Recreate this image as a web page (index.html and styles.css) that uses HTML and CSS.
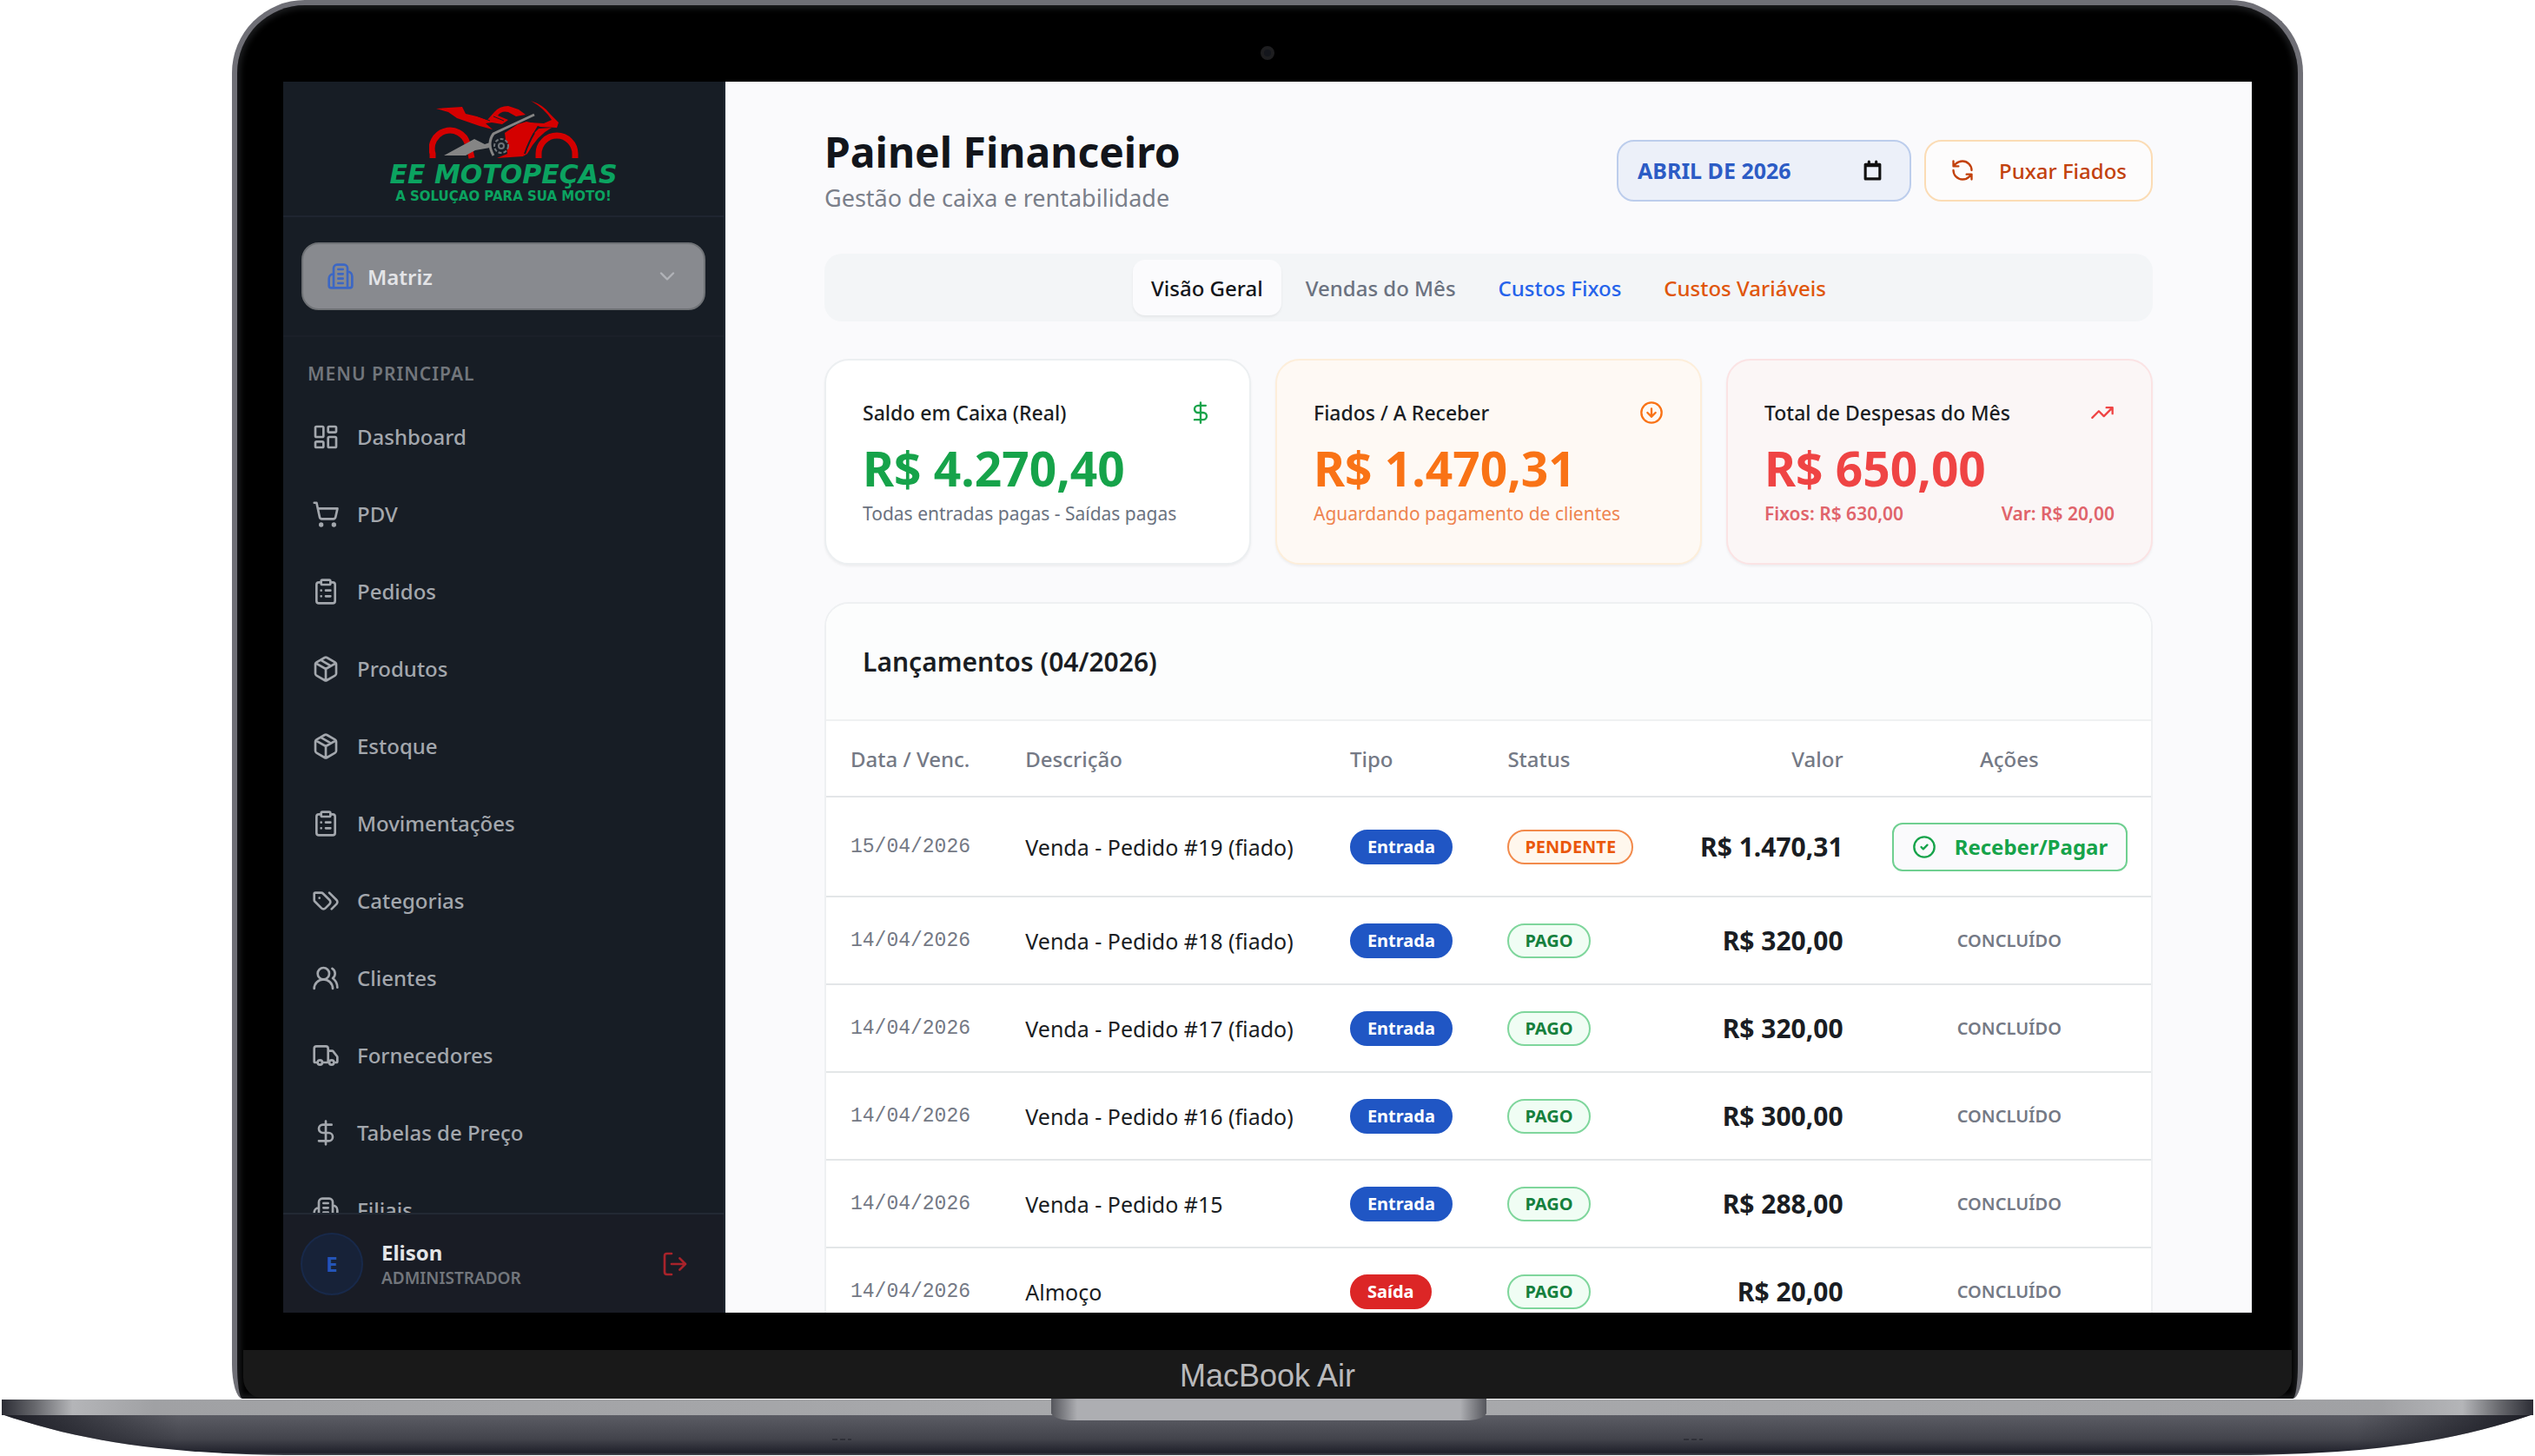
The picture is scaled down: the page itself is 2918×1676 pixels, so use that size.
FILE: index.html
```html
<!DOCTYPE html>
<html lang="pt-BR">
<head>
    <meta charset="UTF-8">
    <meta name="viewport" content="width=device-width, initial-scale=1.0">
    <title>Painel Financeiro - EE Motopeças</title>
    <link rel="stylesheet" href="styles.css">
</head>
<body>
    <!-- Icons -->
    <svg class="sprite" aria-hidden="true">
        <symbol id="i-dashboard" viewBox="0 0 24 24"><rect x="3" y="3" width="7" height="9" rx="1"/><rect x="14" y="3" width="7" height="5" rx="1"/><rect x="14" y="12" width="7" height="9" rx="1"/><rect x="3" y="16" width="7" height="5" rx="1"/></symbol>
        <symbol id="i-cart" viewBox="0 0 24 24"><circle cx="8" cy="21" r="1"/><circle cx="19" cy="21" r="1"/><path d="M2.05 2.05h2l2.66 12.42a2 2 0 0 0 2 1.58h9.78a2 2 0 0 0 1.95-1.57l1.65-7.43H5.12"/></symbol>
        <symbol id="i-clipboard" viewBox="0 0 24 24"><rect x="8" y="2" width="8" height="4" rx="1"/><path d="M16 4h2a2 2 0 0 1 2 2v14a2 2 0 0 1-2 2H6a2 2 0 0 1-2-2V6a2 2 0 0 1 2-2h2M12 11h4M12 16h4M8 11h.01M8 16h.01"/></symbol>
        <symbol id="i-package" viewBox="0 0 24 24"><path d="m7.5 4.27 9 5.15M21 8a2 2 0 0 0-1-1.73l-7-4a2 2 0 0 0-2 0l-7 4A2 2 0 0 0 3 8v8a2 2 0 0 0 1 1.73l7 4a2 2 0 0 0 2 0l7-4A2 2 0 0 0 21 16ZM3.3 7l8.7 5 8.7-5M12 22V12"/></symbol>
        <symbol id="i-tags" viewBox="0 0 24 24"><path d="m15 5 6.3 6.3a2.4 2.4 0 0 1 0 3.4L17 19"/><path d="M9.586 5.586A2 2 0 0 0 8.172 5H3a1 1 0 0 0-1 1v5.172a2 2 0 0 0 .586 1.414L8.29 18.29a2.426 2.426 0 0 0 3.42 0l3.58-3.58a2.426 2.426 0 0 0 0-3.42zM6.5 9.5h.01"/></symbol>
        <symbol id="i-users" viewBox="0 0 24 24"><path d="M18 21a8 8 0 0 0-16 0"/><circle cx="10" cy="8" r="5"/><path d="M22 20c0-3.37-2-6.5-4-8a5 5 0 0 0-.45-8.3"/></symbol>
        <symbol id="i-truck" viewBox="0 0 24 24"><path d="M14 18V6a2 2 0 0 0-2-2H4a2 2 0 0 0-2 2v11a1 1 0 0 0 1 1h2M15 18H9M19 18h2a1 1 0 0 0 1-1v-3.65a1 1 0 0 0-.22-.624l-3.48-4.35A1 1 0 0 0 17.52 8H14"/><circle cx="17" cy="18" r="2"/><circle cx="7" cy="18" r="2"/></symbol>
        <symbol id="i-dollar" viewBox="0 0 24 24"><path d="M12 2v20M17 5H9.5a3.5 3.5 0 0 0 0 7h5a3.5 3.5 0 0 1 0 7H6"/></symbol>
        <symbol id="i-building" viewBox="0 0 24 24"><path d="M6 22V5a3 3 0 0 1 3-3h6a3 3 0 0 1 3 3v17ZM6 10a4 4 0 0 0-4 4v6a2 2 0 0 0 2 2h2M18 8a4 4 0 0 1 4 4v8a2 2 0 0 1-2 2h-2M10 6h4M10 10h4M10 14h4M10 18h4"/></symbol>
        <symbol id="i-chevron" viewBox="0 0 24 24"><path d="m6 9 6 6 6-6"/></symbol>
        <symbol id="i-logout" viewBox="0 0 24 24"><path d="M9 21H5a2 2 0 0 1-2-2V5a2 2 0 0 1 2-2h4M16 17l5-5-5-5M21 12H9"/></symbol>
        <symbol id="i-refresh" viewBox="0 0 24 24"><path d="M21 12a9 9 0 0 0-9-9 9.75 9.75 0 0 0-6.74 2.74L3 8M3 3v5h5M3 12a9 9 0 0 0 9 9 9.75 9.75 0 0 0 6.74-2.74L21 16M16 16h5v5"/></symbol>
        <symbol id="i-calendar" viewBox="0 0 24 24"><path d="M4 5h16v16H4zM4 6.500h16M8 2v3M16 2v3"/></symbol>
        <symbol id="i-arrow-down" viewBox="0 0 24 24"><circle cx="12" cy="12" r="10"/><path d="M12 8v8M8 12l4 4 4-4"/></symbol>
        <symbol id="i-trend" viewBox="0 0 24 24"><path d="m22 7-8.5 8.500-5-5L2 17M16 7h6v6"/></symbol>
        <symbol id="i-check" viewBox="0 0 24 24"><circle cx="12" cy="12" r="10"/><path d="m9 12 2 2 4-4"/></symbol>
    </svg>

    <div class="laptop">
        <div class="lid">
            <div class="camera"></div>
            <div class="screen">
                <aside class="sidebar">
                    <div class="brand">
                        <svg class="brand-bike" viewBox="0 0 172 70" aria-hidden="true">
                            <g fill="none" stroke="#d40000" stroke-width="7">
                                <path d="M4 67V62A20 20 0 0 1 44 50M47 58 49 67"/>
                                <path d="M126 67V62A20 20 0 0 1 168 62V67"/>
                            </g>
                            <g fill="#d40000">
                                <path d="M8 10 38 8 42 16 55 19 67 23 75 14Q81 7 91 7L103 11 111 17 100 19 91 14Q83 12 79 18L91 23 84 28 72 26 65 27 73 34 58 30 32 21 22 14Z"/>
                                <path d="M117 1Q132 6 139 16L149 26 147 32 128 31 114 26 132 27 141 23Q133 10 117 1Z"/>
                                <path d="M87 38 102 28 112 25 126 28 120 38 108 65 78 67 90 62Z"/>
                                <path d="M126 33 141 32Q124 41 113 62L108 65Q113 44 126 33Z"/>
                            </g>
                            <path d="M121 38Q115 48 110 62" fill="none" stroke="#171d25" stroke-width="2"/>
                            <path d="M44 14 70 24 M74 19 86 24" fill="none" stroke="#171d25" stroke-width="1"/>
                            <path d="M17 64 52 45 64 51 70 49V55L53 58 42 64Z" fill="#858585"/>
                            <path d="M121 17 74 39Q66 50 74 64" fill="none" stroke="#858585" stroke-width="3"/>
                            <circle cx="83" cy="53" r="8" fill="#171d25" stroke="#6f7479" stroke-width="2" stroke-dasharray="4 2"/>
                            <circle cx="83" cy="53" r="3" fill="none" stroke="#6f7479" stroke-width="2"/>
                        </svg>
                        <span class="brand-name">EE MOTOPEÇAS</span>
                        <span class="brand-slogan">A SOLUÇAO PARA SUA MOTO!</span>
                    </div>

                    <div class="branch">
                        <div class="branch-box">
                            <svg class="icon branch-icon"><use href="#i-building"/></svg>
                            <select class="branch-select" aria-label="Filial">
                                <option>Matriz</option>
                            </select>
                            <svg class="icon branch-chevron"><use href="#i-chevron"/></svg>
                        </div>
                    </div>

                    <nav class="menu">
                        <h2 class="menu-title">MENU PRINCIPAL</h2>
                        <a class="menu-link" href="#"><svg class="icon"><use href="#i-dashboard"/></svg>Dashboard</a>
                        <a class="menu-link" href="#"><svg class="icon"><use href="#i-cart"/></svg>PDV</a>
                        <a class="menu-link" href="#"><svg class="icon"><use href="#i-clipboard"/></svg>Pedidos</a>
                        <a class="menu-link" href="#"><svg class="icon"><use href="#i-package"/></svg>Produtos</a>
                        <a class="menu-link" href="#"><svg class="icon"><use href="#i-package"/></svg>Estoque</a>
                        <a class="menu-link" href="#"><svg class="icon"><use href="#i-clipboard"/></svg>Movimentações</a>
                        <a class="menu-link" href="#"><svg class="icon"><use href="#i-tags"/></svg>Categorias</a>
                        <a class="menu-link" href="#"><svg class="icon"><use href="#i-users"/></svg>Clientes</a>
                        <a class="menu-link" href="#"><svg class="icon"><use href="#i-truck"/></svg>Fornecedores</a>
                        <a class="menu-link" href="#"><svg class="icon"><use href="#i-dollar"/></svg>Tabelas de Preço</a>
                        <a class="menu-link" href="#"><svg class="icon"><use href="#i-building"/></svg>Filiais</a>
                    </nav>

                    <div class="user">
                        <span class="avatar">E</span>
                        <div class="user-info">
                            <strong class="user-name">Elison</strong>
                            <span class="user-role">ADMINISTRADOR</span>
                        </div>
                        <button class="logout" type="button" aria-label="Sair"><svg class="icon"><use href="#i-logout"/></svg></button>
                    </div>
                </aside>

                <main class="content">
                    <header class="page-header">
                        <div>
                            <h1>Painel Financeiro</h1>
                            <p class="subtitle">Gestão de caixa e rentabilidade</p>
                        </div>
                        <div class="actions">
                            <label class="month">
                                <input class="month-input" type="text" value="ABRIL DE 2026" aria-label="Mês">
                                <svg class="icon month-icon"><use href="#i-calendar"/></svg>
                            </label>
                            <button class="pull-btn" type="button"><svg class="icon icon-sm"><use href="#i-refresh"/></svg>Puxar Fiados</button>
                        </div>
                    </header>

                    <div class="tabs">
                        <button class="tab active" type="button">Visão Geral</button>
                        <button class="tab" type="button">Vendas do Mês</button>
                        <button class="tab blue" type="button">Custos Fixos</button>
                        <button class="tab orange" type="button">Custos Variáveis</button>
                    </div>

                    <section class="cards">
                        <article class="card card-green">
                            <div class="card-top"><h3>Saldo em Caixa (Real)</h3><svg class="icon icon-sm"><use href="#i-dollar"/></svg></div>
                            <div class="card-value">R$ 4.270,40</div>
                            <div class="card-note"><span>Todas entradas pagas - Saídas pagas</span></div>
                        </article>
                        <article class="card card-orange">
                            <div class="card-top"><h3>Fiados / A Receber</h3><svg class="icon icon-sm"><use href="#i-arrow-down"/></svg></div>
                            <div class="card-value">R$ 1.470,31</div>
                            <div class="card-note"><span>Aguardando pagamento de clientes</span></div>
                        </article>
                        <article class="card card-red">
                            <div class="card-top"><h3>Total de Despesas do Mês</h3><svg class="icon icon-sm"><use href="#i-trend"/></svg></div>
                            <div class="card-value">R$ 650,00</div>
                            <div class="card-note"><span>Fixos: R$ 630,00</span><span>Var: R$ 20,00</span></div>
                        </article>
                    </section>

                    <section class="entries">
                        <h2 class="entries-title">Lançamentos (04/2026)</h2>
                        <table>
                            <thead>
                                <tr>
                                    <th class="col-date">Data / Venc.</th>
                                    <th class="col-desc">Descrição</th>
                                    <th class="col-type">Tipo</th>
                                    <th class="col-status">Status</th>
                                    <th class="col-value">Valor</th>
                                    <th class="col-action">Ações</th>
                                </tr>
                            </thead>
                            <tbody>
                                <tr class="pending">
                                    <td class="date">15/04/2026</td>
                                    <td>Venda - Pedido #19 (fiado)</td>
                                    <td><span class="badge in">Entrada</span></td>
                                    <td><span class="badge wait">PENDENTE</span></td>
                                    <td class="value">R$ 1.470,31</td>
                                    <td class="action"><button class="pay-btn" type="button"><svg class="icon icon-sm"><use href="#i-check"/></svg>Receber/Pagar</button></td>
                                </tr>
                                <tr>
                                    <td class="date">14/04/2026</td>
                                    <td>Venda - Pedido #18 (fiado)</td>
                                    <td><span class="badge in">Entrada</span></td>
                                    <td><span class="badge paid">PAGO</span></td>
                                    <td class="value">R$ 320,00</td>
                                    <td class="action">CONCLUÍDO</td>
                                </tr>
                                <tr>
                                    <td class="date">14/04/2026</td>
                                    <td>Venda - Pedido #17 (fiado)</td>
                                    <td><span class="badge in">Entrada</span></td>
                                    <td><span class="badge paid">PAGO</span></td>
                                    <td class="value">R$ 320,00</td>
                                    <td class="action">CONCLUÍDO</td>
                                </tr>
                                <tr>
                                    <td class="date">14/04/2026</td>
                                    <td>Venda - Pedido #16 (fiado)</td>
                                    <td><span class="badge in">Entrada</span></td>
                                    <td><span class="badge paid">PAGO</span></td>
                                    <td class="value">R$ 300,00</td>
                                    <td class="action">CONCLUÍDO</td>
                                </tr>
                                <tr>
                                    <td class="date">14/04/2026</td>
                                    <td>Venda - Pedido #15</td>
                                    <td><span class="badge in">Entrada</span></td>
                                    <td><span class="badge paid">PAGO</span></td>
                                    <td class="value">R$ 288,00</td>
                                    <td class="action">CONCLUÍDO</td>
                                </tr>
                                <tr>
                                    <td class="date">14/04/2026</td>
                                    <td>Almoço</td>
                                    <td><span class="badge out">Saída</span></td>
                                    <td><span class="badge paid">PAGO</span></td>
                                    <td class="value">R$ 20,00</td>
                                    <td class="action">CONCLUÍDO</td>
                                </tr>
                            </tbody>
                        </table>
                    </section>
                </main>
            </div>
            <div class="chin">MacBook Air</div>
        </div>

        <svg class="base" viewBox="0 0 2918 66" preserveAspectRatio="none" aria-hidden="true">
            <defs>
                <linearGradient id="body" x1="0" y1="0" x2="0" y2="1">
                    <stop offset="0" stop-color="#5c5d65"/>
                    <stop offset="0.6" stop-color="#43444c"/>
                    <stop offset="0.94" stop-color="#20212b"/>
                    <stop offset="1" stop-color="#4a4b54"/>
                </linearGradient>
                <linearGradient id="shade">
                    <stop offset="0" stop-color="#15161e" stop-opacity="0.9"/>
                    <stop offset="0.07" stop-color="#15161e" stop-opacity="0"/>
                    <stop offset="0.93" stop-color="#15161e" stop-opacity="0"/>
                    <stop offset="1" stop-color="#15161e" stop-opacity="0.9"/>
                </linearGradient>
                <linearGradient id="deck">
                    <stop offset="0" stop-color="#2c2d35"/>
                    <stop offset="0.013" stop-color="#66676c"/>
                    <stop offset="0.028" stop-color="#b4b5b8"/>
                    <stop offset="0.06" stop-color="#a0a1a4"/>
                    <stop offset="0.5" stop-color="#a9aaad"/>
                    <stop offset="0.94" stop-color="#a0a1a4"/>
                    <stop offset="0.972" stop-color="#b4b5b8"/>
                    <stop offset="0.987" stop-color="#66676c"/>
                    <stop offset="1" stop-color="#2c2d35"/>
                </linearGradient>
                <linearGradient id="notch">
                    <stop offset="0" stop-color="#55565c"/>
                    <stop offset="0.06" stop-color="#adaeb2"/>
                    <stop offset="0.94" stop-color="#adaeb2"/>
                    <stop offset="1" stop-color="#55565c"/>
                </linearGradient>
            </defs>
            <path d="M2 18H2916C2830 47 2740 63 2590 65H328C178 63 88 47 2 18Z" fill="url(#body)"/>
            <path d="M2 18H2916C2830 47 2740 63 2590 65H328C178 63 88 47 2 18Z" fill="url(#shade)"/>
            <rect x="2" y="1" width="2914" height="18" fill="url(#deck)"/>
            <path d="M1210 0H1711V17Q1706 25 1686 25H1236Q1215 25 1210 17Z" fill="url(#notch)"/>
            <path d="M958 47h22M1938 47h22" stroke="#2f3038" stroke-width="2" stroke-dasharray="6 3"/>
        </svg>
    </div>
</body>
</html>
```

FILE: styles.css
```css
* {
    box-sizing: border-box;
}

body {
    margin: 0;
    background-color: #fff;
    font-family: "Noto Sans", sans-serif;
    font-size: 24px;
    color: #1a1d23;
}

h1, h2, h3, p {
    margin: 0;
}

button, input, select {
    font-family: inherit;
    font-size: 24px;
}

button {
    cursor: pointer;
}

.sprite {
    position: absolute;
    width: 0;
    height: 0;
}

.icon {
    width: 32px;
    height: 32px;
    flex-shrink: 0;
    fill: none;
    stroke: currentColor;
    stroke-width: 2;
    stroke-linecap: round;
    stroke-linejoin: round;
}

.icon-sm {
    width: 28px;
    height: 28px;
}

/* Laptop */
.laptop {
    display: flex;
    flex-direction: column;
    height: 100vh;
}

.lid {
    position: relative;
    flex: 1;
    min-height: 0;
    display: flex;
    flex-direction: column;
    width: 81.7%;
    margin: 0 auto;
    padding-top: 88px;
    background-color: #000;
    border: 6px solid #6f6f76;
    border-bottom: 0;
    border-radius: 84px 84px 12px 12px / 84px 84px 40px 40px;
    box-shadow: inset 0 0 6px 4px #1a1b1d;
    overflow: hidden;
}

.camera {
    position: absolute;
    top: 47px;
    left: 50%;
    width: 16px;
    height: 16px;
    margin-left: -8px;
    border-radius: 50%;
    background-color: #14161c;
    border: 4px solid #1e1e20;
}

.screen {
    flex: 1;
    min-height: 0;
    display: flex;
    margin: 0 53px 43px;
    background-color: #fafafc;
    overflow: hidden;
}

.chin {
    height: 56px;
    margin: 0 7px;
    border-radius: 0 0 24px 24px;
    background-color: #191919;
    color: #b9b9bb;
    font-family: "Liberation Sans", Arial, sans-serif;
    font-size: 36px;
    line-height: 60px;
    text-align: center;
}

.base {
    display: block;
    width: 100%;
    height: 66px;
}

/* Sidebar */
.sidebar {
    width: 509px;
    flex-shrink: 0;
    display: flex;
    flex-direction: column;
    background-color: #171d25;
    border-right: 2px solid #1f2630;
}

.brand {
    height: 156px;
    padding-top: 21px;
    display: flex;
    flex-direction: column;
    align-items: center;
    border-bottom: 2px solid #1f2530;
    font-family: "DejaVu Sans", sans-serif;
    color: #0ba360;
}

.brand-bike {
    width: 172px;
    height: 70px;
}

.brand-name {
    font-size: 30px;
    line-height: 32px;
    font-weight: bold;
    font-style: italic;
}

.brand-slogan {
    font-size: 15px;
    line-height: 18px;
    font-weight: bold;
}

.branch {
    padding: 29px 21px;
    border-bottom: 2px solid #1b2029;
}

.branch-box {
    position: relative;
}

.branch-icon {
    position: absolute;
    top: 23px;
    left: 29px;
    color: #3c67c4;
}

.branch-chevron {
    position: absolute;
    top: 25px;
    right: 30px;
    width: 28px;
    height: 28px;
    color: #b1b3b8;
}

.branch-select {
    display: block;
    width: 100%;
    height: 78px;
    padding: 0 74px;
    appearance: none;
    background-color: #888a8f;
    border: 2px solid #6f7276;
    border-radius: 20px;
    color: #e3e4e7;
    font-weight: 600;
}

.menu {
    flex: 1;
    min-height: 0;
    padding: 28px;
    overflow: hidden;
}

.menu-title {
    margin-bottom: 22px;
    font-size: 21px;
    line-height: 28px;
    font-weight: 600;
    letter-spacing: 1px;
    color: #72767c;
}

.menu-link {
    display: flex;
    align-items: center;
    gap: 20px;
    height: 73px;
    margin-bottom: 16px;
    padding-left: 5px;
    font-weight: 500;
    color: #a3a7ad;
    text-decoration: none;
}

.user {
    height: 115px;
    display: flex;
    align-items: center;
    gap: 21px;
    padding: 0 40px 0 20px;
    background-color: #191c25;
    border-top: 2px solid #222933;
}

.avatar {
    width: 72px;
    height: 72px;
    border: 2px solid #18294a;
    border-radius: 50%;
    background-color: #172238;
    color: #2454b8;
    font-weight: bold;
    line-height: 68px;
    text-align: center;
}

.user-info {
    flex: 1;
    display: flex;
    flex-direction: column;
}

.user-name {
    line-height: 32px;
    color: #e3e5e8;
}

.user-role {
    font-size: 19px;
    line-height: 26px;
    font-weight: 600;
    color: #72767c;
}

.logout {
    display: flex;
    padding: 0;
    border: 0;
    background: none;
    color: #a8232b;
}

/* Content */
.content {
    flex: 1;
    min-width: 0;
    padding: 49px 114px 0;
}

.page-header {
    display: flex;
    justify-content: space-between;
    align-items: center;
    margin-bottom: 43px;
}

h1 {
    font-size: 48px;
    line-height: 64px;
    font-weight: bold;
    color: #12151b;
}

.subtitle {
    font-size: 27px;
    line-height: 42px;
    color: #7a7f8a;
}

.actions {
    display: flex;
    gap: 15px;
}

.month {
    position: relative;
    width: 339px;
}

.month-input {
    width: 100%;
    height: 71px;
    padding: 0 22px;
    border: 2px solid #bccdec;
    border-radius: 20px;
    background-color: #ecf0f9;
    color: #2c5cc5;
    font-size: 25px;
    font-weight: bold;
}

.month-icon {
    position: absolute;
    top: 23px;
    right: 32px;
    width: 25px;
    height: 25px;
    color: #111;
    stroke-width: 3;
}

.pull-btn {
    display: flex;
    align-items: center;
    gap: 28px;
    height: 71px;
    padding: 0 28px;
    border: 2px solid #fbdcb5;
    border-radius: 20px;
    background-color: #fdfcfc;
    color: #c2410c;
    font-weight: 500;
}

.tabs {
    display: flex;
    justify-content: center;
    gap: 7px;
    padding: 7px;
    margin-bottom: 43px;
    border-radius: 20px;
    background-color: #f3f5f7;
}

.tab {
    height: 64px;
    padding: 0 21px;
    border: 0;
    border-radius: 14px;
    background: none;
    color: #6b7280;
    font-weight: 500;
}

.tab.active {
    background-color: #fbfbfd;
    color: #12151b;
    box-shadow: 0 2px 3px rgba(0, 0, 0, 0.06);
}

.tab.blue {
    color: #2563eb;
}

.tab.orange {
    color: #e0560b;
}

.cards {
    display: grid;
    grid-template-columns: repeat(3, 1fr);
    gap: 28px;
    margin-bottom: 43px;
}

.card {
    height: 237px;
    padding: 42px;
    border: 2px solid #eceff1;
    border-radius: 28px;
    background-color: #fff;
    box-shadow: 0 2px 3px rgba(0, 0, 0, 0.05);
}

.card-top {
    display: flex;
    justify-content: space-between;
    align-items: center;
}

.card h3 {
    font-size: 23px;
    line-height: 36px;
    font-weight: 500;
}

.card-value {
    margin-top: 10px;
    font-size: 55px;
    line-height: 72px;
    font-weight: bold;
}

.card-note {
    display: flex;
    justify-content: space-between;
    font-size: 21px;
    line-height: 32px;
    color: #6b7280;
}

.card-green .icon, .card-green .card-value {
    color: #16a34a;
}

.card-orange {
    background-color: #fef9f4;
    border-color: #fdeeda;
}

.card-orange .icon, .card-orange .card-value {
    color: #f97316;
}

.card-orange .card-note {
    color: #ee8450;
}

.card-red {
    background-color: #fbf6f6;
    border-color: #fbe3e4;
}

.card-red .icon, .card-red .card-value {
    color: #ef4444;
}

.card-red .card-note {
    color: #e0646b;
    font-weight: 600;
}

/* Table */
.entries {
    border: 2px solid #eef0f2;
    border-radius: 28px;
    background-color: #fff;
    overflow: hidden;
}

.entries-title {
    height: 135px;
    padding: 0 42px;
    border-bottom: 2px solid #eff1f2;
    background-color: #fcfdfd;
    font-size: 30px;
    line-height: 134px;
    font-weight: 600;
}

table {
    width: 100%;
    table-layout: fixed;
    border-collapse: collapse;
}

th {
    height: 87px;
    padding: 0 28px;
    font-weight: 500;
    text-align: left;
    color: #747985;
}

td {
    height: 101px;
    padding: 0 28px;
    font-size: 25px;
    white-space: nowrap;
}

tr {
    border-bottom: 2px solid #e3e6e8;
}

.pending td {
    height: 115px;
}

.col-date {
    width: 13.2%;
    white-space: nowrap;
}

.col-desc {
    width: 24.5%;
}

.col-type {
    width: 11.9%;
}

.col-status {
    width: 14%;
}

.col-value {
    width: 15%;
    text-align: right;
}

.col-action {
    text-align: center;
}

td.date {
    font-family: "Liberation Mono", monospace;
    font-size: 23px;
    color: #747985;
}

td.value {
    padding-left: 0;
    font-size: 30px;
    font-weight: bold;
    text-align: right;
}

td.action {
    font-size: 20px;
    font-weight: 600;
    text-align: center;
    color: #747985;
}

.badge {
    display: inline-block;
    padding: 0 18px;
    border: 2px solid;
    border-radius: 20px;
    font-size: 20px;
    line-height: 36px;
    font-weight: bold;
    vertical-align: middle;
}

.in {
    background-color: #2056c4;
    border-color: #2056c4;
    color: #fff;
}

.out {
    background-color: #dc2626;
    border-color: #dc2626;
    color: #fff;
}

.wait {
    background-color: #fff7ed;
    border-color: #f28a4b;
    color: #ea580c;
}

.paid {
    background-color: #f0fdf4;
    border-color: #7fd69c;
    color: #15803d;
}

.pay-btn {
    display: inline-flex;
    align-items: center;
    gap: 21px;
    height: 56px;
    padding: 0 21px;
    border: 2px solid #6fcf90;
    border-radius: 12px;
    background-color: #fafafc;
    color: #16a34a;
    font-weight: bold;
    vertical-align: middle;
}
```
